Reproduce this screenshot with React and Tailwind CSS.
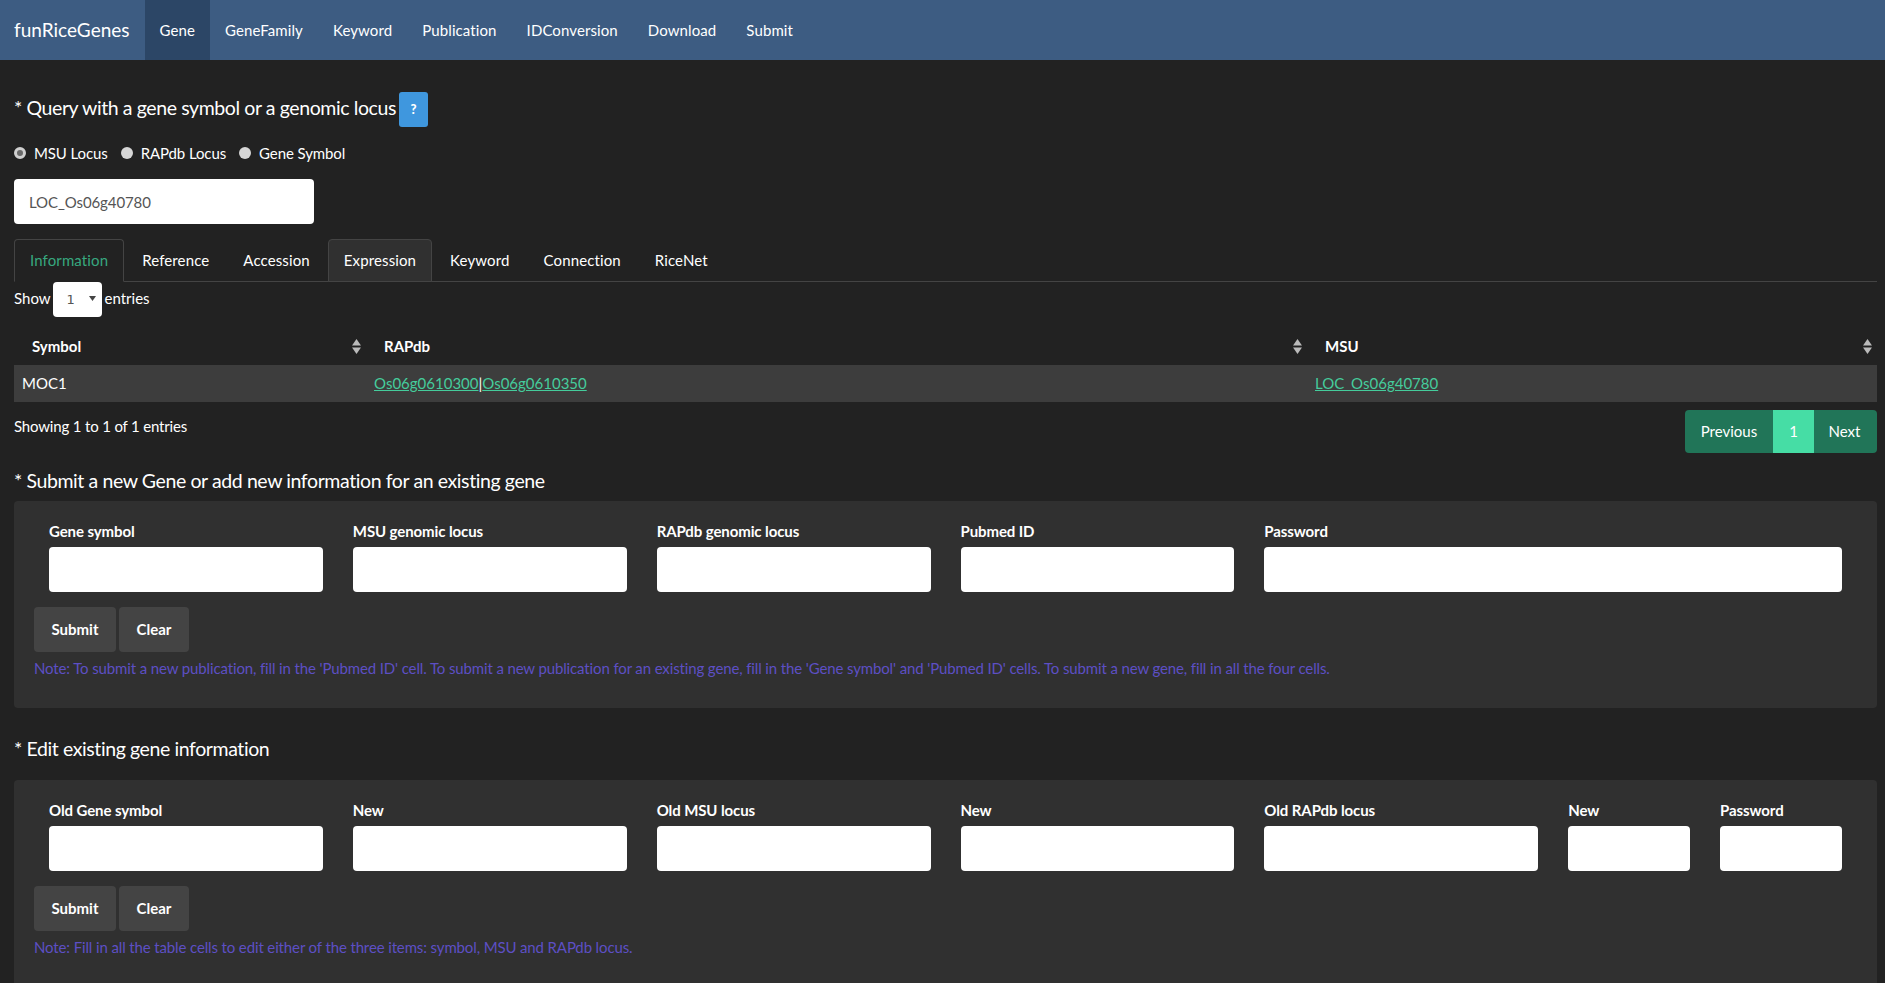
import React from 'react'

const navItems = ['Gene', 'GeneFamily', 'Keyword', 'Publication', 'IDConversion', 'Download', 'Submit']
const tabs = ['Information', 'Reference', 'Accession', 'Expression', 'Keyword', 'Connection', 'RiceNet']

const submitFields = [
  { label: 'Gene symbol', span: 'col-span-2' },
  { label: 'MSU genomic locus', span: 'col-span-2' },
  { label: 'RAPdb genomic locus', span: 'col-span-2' },
  { label: 'Pubmed ID', span: 'col-span-2' },
  { label: 'Password', span: 'col-span-4' },
]

const editFields = [
  { label: 'Old Gene symbol', span: 'col-span-2' },
  { label: 'New', span: 'col-span-2' },
  { label: 'Old MSU locus', span: 'col-span-2' },
  { label: 'New', span: 'col-span-2' },
  { label: 'Old RAPdb locus', span: 'col-span-2' },
  { label: 'New', span: 'col-span-1' },
  { label: 'Password', span: 'col-span-1' },
]

function SortIcon() {
  return (
    <svg width="9" height="15" viewBox="0 0 9 15" className="shrink-0">
      <path d="M4.5 0 L9 6.5 L0 6.5 Z" fill="#bbbbbb" />
      <path d="M0 8.5 L9 8.5 L4.5 15 Z" fill="#bbbbbb" />
    </svg>
  )
}

function Radio({ label, checked }) {
  return (
    <label className="flex items-center">
      <input
        type="radio"
        name="locus"
        defaultChecked={checked}
        className="appearance-none w-[12px] h-[12px] rounded-full bg-[#d6d6d6] checked:border-[3px] checked:border-[#d0d0d0] checked:bg-[#6a6a6a] mr-[8px]"
      />
      <span>{label}</span>
    </label>
  )
}

function FormPanel({ fields, note, className }) {
  return (
    <div className={`bg-[#303030] rounded-[4px] px-[20px] ${className}`}>
      <div className="grid grid-cols-12">
        {fields.map((f, i) => (
          <div key={i} className={`${f.span} px-[15px]`}>
            <label className="block font-bold text-white h-[26px] leading-[20px] tracking-[-0.1px]">{f.label}</label>
            <input type="text" className="block w-full h-[45px] bg-white rounded-[4px]" />
          </div>
        ))}
      </div>
      <div className="flex gap-[3px] mt-[15px]">
        <button type="button" className="h-[45px] w-[82px] bg-[#444] rounded-[4px] text-white font-bold">Submit</button>
        <button type="button" className="h-[45px] w-[70px] bg-[#444] rounded-[4px] text-white font-bold">Clear</button>
      </div>
      <p className="mt-[5px] leading-[22px] text-[#5d4fc4] tracking-[-0.13px]">{note}</p>
    </div>
  )
}

export default function App() {
  return (
    <div className="h-[983px] overflow-hidden bg-[#222222] text-white text-[15px] font-['Lato',sans-serif]">
      <nav className="h-[60px] bg-[#3d5c82] flex items-stretch">
        <a className="pl-[14px] pr-[15px] text-[19px] leading-[60px] text-white">funRiceGenes</a>
        {navItems.map((item, i) => (
          <a
            key={item}
            className={`px-[15px] leading-[60px] text-white tracking-[0.1px] ${i === 0 ? 'bg-[#2c4666]' : ''}`}
          >
            {item}
          </a>
        ))}
      </nav>

      <main className="px-[14px] pr-[8px]">
        <div className="flex items-center mt-[32px] h-[35px]">
          <h2 className="text-[19.5px] leading-[35px] tracking-[-0.4px] pb-[4px]">* Query with a gene symbol or a genomic locus</h2>
          <button type="button" className="ml-[3px] w-[29px] h-[35px] bg-[#3f97de] rounded-[3px] text-[13px] font-black text-white">?</button>
        </div>

        <div className="flex items-center gap-[13px] mt-[15px] h-[22px] tracking-[-0.1px]">
          <Radio label="MSU Locus" checked />
          <Radio label="RAPdb Locus" />
          <Radio label="Gene Symbol" />
        </div>

        <input
          type="text"
          defaultValue="LOC_Os06g40780"
          className="block mt-[15px] w-[300px] h-[45px] px-[15px] bg-white rounded-[4px] text-[#555] outline-none tracking-[-0.1px]"
        />

        <div className="flex mt-[15px] h-[43px] border-b border-[#444] tracking-[0.12px]">
          {tabs.map((tab, i) => (
            <a
              key={tab + i}
              className={`px-[15px] leading-[41px] rounded-t-[4px] mr-[2px] h-[43px] ${
                i === 0
                  ? 'text-[#37a87f] bg-[#222222] border border-[#444] border-b-[#222222]'
                  : i === 3
                    ? 'bg-[#303030] border border-[#444] text-white'
                    : 'text-white border border-transparent'
              }`}
            >
              {tab}
            </a>
          ))}
        </div>

        <div className="flex items-center h-[35px]">
          <span className="pb-[2px]">Show</span>
          <div className="relative ml-[2px] mr-[3px]">
            <select className="appearance-none block w-[49px] h-[35px] bg-white rounded-[4px] pl-[14px] text-[#555] text-[13px] font-['DejaVu_Sans',sans-serif] outline-none">
              <option>1</option>
            </select>
            <svg width="7" height="5" viewBox="0 0 7 5" className="absolute right-[6px] top-[14px]">
              <path d="M0 0 L7 0 L3.5 5 Z" fill="#444" />
            </svg>
          </div>
          <span className="pb-[2px]">entries</span>
        </div>

        <table className="w-full table-fixed mt-[10px] border-collapse">
          <colgroup>
            <col className="w-[352px]" />
            <col className="w-[941px]" />
            <col />
          </colgroup>
          <thead>
            <tr className="h-[38px]">
              {['Symbol', 'RAPdb', 'MSU'].map((h) => (
                <th key={h} className="pl-[18px] pr-[5px] text-left font-bold">
                  <div className="flex items-center justify-between">
                    <span>{h}</span>
                    <SortIcon />
                  </div>
                </th>
              ))}
            </tr>
          </thead>
          <tbody>
            <tr className="h-[37px] bg-[#3d3d3d]">
              <td className="px-[8px]">MOC1</td>
              <td className="px-[8px]">
                <a className="text-[#45cc9c] underline">Os06g0610300</a>|<a className="text-[#45cc9c] underline">Os06g0610350</a>
              </td>
              <td className="px-[8px]">
                <a className="text-[#45cc9c] underline">LOC_Os06g40780</a>
              </td>
            </tr>
          </tbody>
        </table>

        <div className="flex justify-between items-start mt-[8px]">
          <span className="mt-[5px] leading-[22px] tracking-[-0.17px]">Showing 1 to 1 of 1 entries</span>
          <div className="flex h-[43px] leading-[43px] rounded-[4px] overflow-hidden bg-[#217558]">
            <a className="w-[88px] text-center">Previous</a>
            <a className="w-[41px] text-center bg-[#46dda5]">1</a>
            <a className="w-[63px] text-center pr-[2px]">Next</a>
          </div>
        </div>

        <h2 className="text-[19.5px] leading-[30px] mt-[13px] tracking-[-0.4px]">* Submit a new Gene or add new information for an existing gene</h2>

        <FormPanel
          className="mt-[5px] h-[207px] pt-[20px]"
          fields={submitFields}
          note="Note: To submit a new publication, fill in the 'Pubmed ID' cell. To submit a new publication for an existing gene, fill in the 'Gene symbol' and 'Pubmed ID' cells. To submit a new gene, fill in all the four cells."
        />

        <h2 className="text-[19.5px] leading-[30px] mt-[26px] tracking-[-0.4px]">* Edit existing gene information</h2>

        <FormPanel
          className="mt-[16px] h-[207px] pt-[20px]"
          fields={editFields}
          note="Note: Fill in all the table cells to edit either of the three items: symbol, MSU and RAPdb locus."
        />
      </main>
    </div>
  )
}
